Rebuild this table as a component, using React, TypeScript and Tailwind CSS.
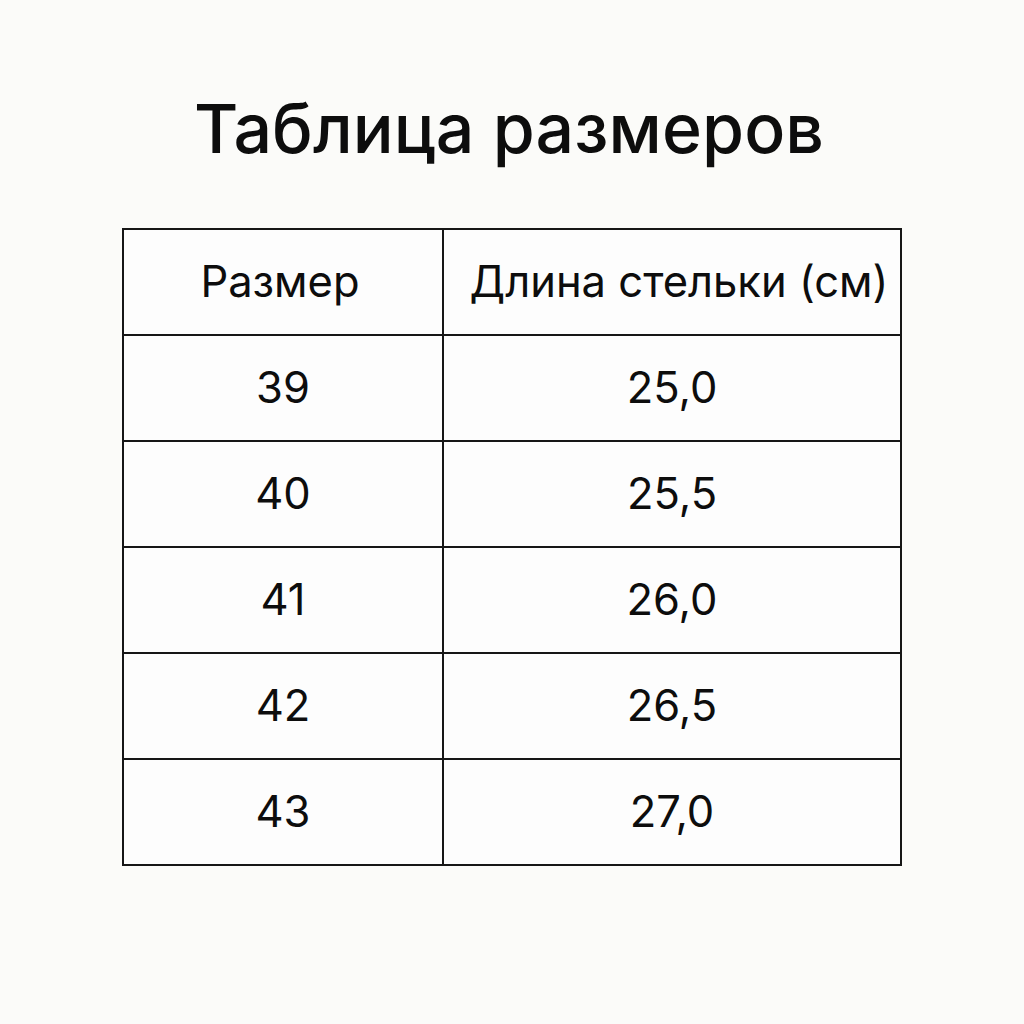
const rows = [
  { size: '39', length: '25,0' },
  { size: '40', length: '25,5' },
  { size: '41', length: '26,0' },
  { size: '42', length: '26,5' },
  { size: '43', length: '27,0' },
]

export default function App() {
  return (
    <div className="min-h-[1024px] w-full bg-[#fbfbf9] flex flex-col items-center font-['Inter',sans-serif] text-[#0d0d0d]">
      <h1 className="mt-[86px] mr-[6px] text-[68px] leading-[84px] font-medium tracking-[0.1px]">Таблица размеров</h1>

      <table className="mt-[58px] border-collapse bg-[#fdfdfd]">
        <thead>
          <tr className="h-[106px]">
            <th className="w-[320px] pr-[6px] border-2 border-[#161616] text-[43.5px] font-normal">Размер</th>
            <th className="w-[458px] pl-[14px] border-2 border-[#161616] text-[43.5px] font-normal">Длина стельки (см)</th>
          </tr>
        </thead>
        <tbody>
          {rows.map((row) => (
            <tr key={row.size} className="h-[106px]">
              <td className="border-2 border-[#161616] text-center text-[43.5px]">{row.size}</td>
              <td className="border-2 border-[#161616] text-center text-[43.5px]">{row.length}</td>
            </tr>
          ))}
        </tbody>
      </table>
    </div>
  )
}
